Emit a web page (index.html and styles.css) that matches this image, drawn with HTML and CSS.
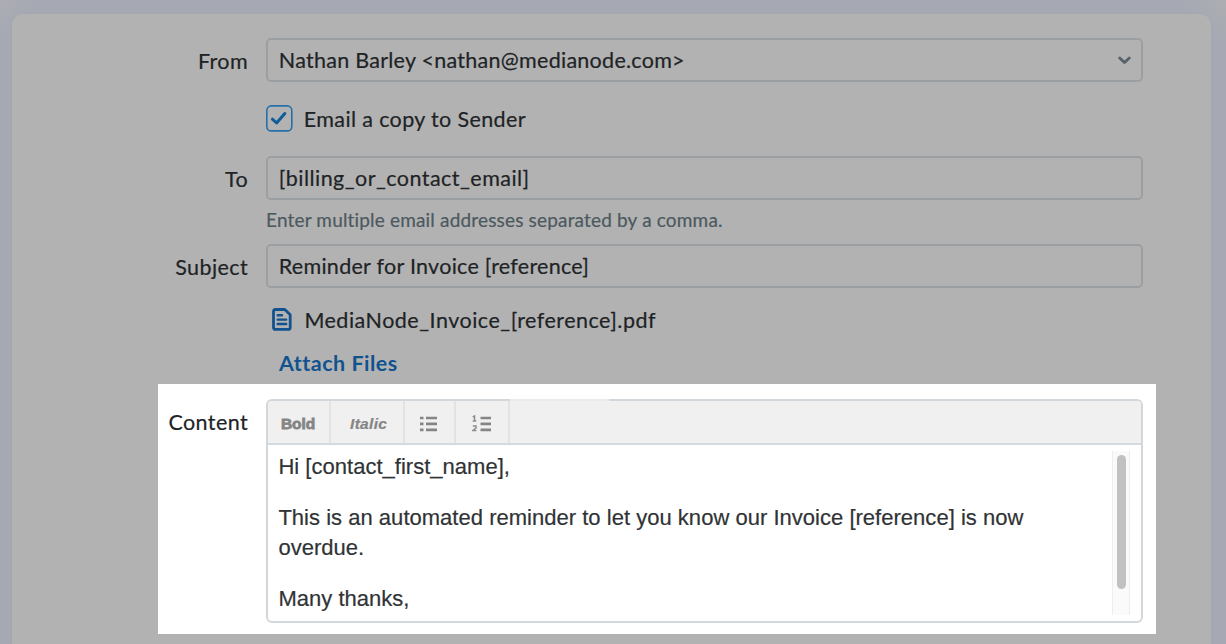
FILE: index.html
```html
<!DOCTYPE html>
<html lang="en">
<head>
<meta charset="utf-8">
<title>Invoice reminder</title>
<link rel="stylesheet" href="styles.css">
</head>
<body>
<main class="panel">
  <div class="row row-from">
    <label class="label">From</label>
    <div class="field"><span class="t-from">Nathan Barley &lt;nathan@medianode.com&gt;</span>
      <svg class="chevron" width="15" height="11" viewBox="0 0 15 11"><path d="M2.7 3L7.5 7.6L12.3 3" fill="none" stroke="#566169" stroke-width="2.8" stroke-linecap="round" stroke-linejoin="round"/></svg>
    </div>
  </div>
  <div class="row row-check">
    <div class="check">
      <svg width="27" height="27" viewBox="0 0 27 27"><rect x="0.8" y="0.9" width="25" height="25" rx="4.5" fill="none" stroke="#2570a8" stroke-width="1.6"/><path d="M6.4 14.2L10.6 18L18.8 8.5" fill="none" stroke="#0f5c98" stroke-width="3" stroke-linecap="round" stroke-linejoin="round"/></svg>
      <span class="t-check">Email a copy to Sender</span>
    </div>
  </div>
  <div class="row row-to">
    <label class="label">To</label>
    <div class="field"><span class="t-to">[billing_or_contact_email]</span></div>
  </div>
  <p class="help">Enter multiple email addresses separated by a comma.</p>
  <div class="row row-subject">
    <label class="label">Subject</label>
    <div class="field"><span class="t-subject">Reminder for Invoice [reference]</span></div>
  </div>
  <div class="file">
    <svg width="20" height="23" viewBox="0 0 20 23"><path d="M3 1.5H12.8L18.2 6.7V19.4Q18.2 21.4 16.2 21.4H3.5Q1.5 21.4 1.5 19.4V3.4Q1.5 1.5 3.4 1.5Z" fill="none" stroke="#12528f" stroke-width="2.8" stroke-linejoin="round"/><path d="M5.7 7.2H10M5.7 11.6H14.2M5.7 16H14.2" fill="none" stroke="#12528f" stroke-width="2.4" stroke-linecap="round"/></svg>
    <span class="t-file">MediaNode_Invoice_[reference].pdf</span>
  </div>
  <a class="attach">Attach Files</a>
  <section class="spotlight">
    <label class="label content-label">Content</label>
    <div class="editor">
      <div class="toolbar">
        <span class="tool bold">Bold</span>
        <span class="tool italic">Italic</span>
        <span class="tool list"><svg width="18" height="17" viewBox="0 0 18 17"><path d="M0 3H3.5M0 8.9H3.5M0 14.8H3.5M6 3H17M6 8.9H17M6 14.8H17" stroke="#858585" stroke-width="2.7" fill="none"/></svg></span>
        <span class="tool numbers"><svg width="20" height="17" viewBox="0 0 20 17"><path d="M8.5 3H19M8.5 8.9H19M8.5 14.8H19" stroke="#858585" stroke-width="2.7" fill="none"/><path d="M.8 2L2.5 1V6M.7 6H4.3M.8 11H4V13L1 15.5H4.5" stroke="#8d8d8d" stroke-width="1.5" fill="none"/></svg></span>
      </div>
      <div class="document">
        <div class="message">
          <p>Hi [contact_first_name],</p>
          <p>This is an automated reminder to let you know our Invoice [reference] is now overdue.</p>
          <p>Many thanks,</p>
        </div>
        <div class="track"><div class="thumb"></div></div>
      </div>
    </div>
  </section>
</main>
</body>
</html>
```
FILE: styles.css
```css
* { box-sizing: border-box; }
body {
  margin: 0;
  height: 644px;
  overflow: hidden;
  padding: 14px 15px 0 12px;
  background:
    radial-gradient(circle at 0 0, #acadb2 0, transparent 32px),
    radial-gradient(circle at 100% 0, #acadb2 0, transparent 44px),
    #a6a9b3;
  font-family: Lato, sans-serif;
  font-size: 21.5px;
  color: #202325;
  -webkit-text-stroke: .2px currentColor;
}
p { margin: 0; }
svg { display: block; flex: none; }
.panel {
  height: 640px;
  padding-top: 24px;
  border-radius: 11px;
  background: #b2b2b2;
  box-shadow: 0 0 3px #a2a4ac;
}
.row {
  display: grid;
  grid-template-columns: 236px 877px;
  column-gap: 17.6px;
  align-items: center;
}
.label { text-align: right; line-height: 26px; white-space: nowrap; padding-top: 1px; letter-spacing: .4px; }
.field {
  display: flex;
  align-items: center;
  justify-content: space-between;
  height: 44px;
  padding: 0 9px 0 11.2px;
  border: 2px solid #9b9fa2;
  border-radius: 5px;
  line-height: 26px;
  white-space: nowrap;
}
.t-from { letter-spacing: .27px; }
.t-check { letter-spacing: .37px; }
.t-to { letter-spacing: .46px; }
.t-subject { letter-spacing: .28px; }
.t-file { padding-top: 2px; letter-spacing: .5px; }
.row-check { margin-top: 23px; }
.check { grid-column: 2; display: flex; align-items: center; gap: 11.2px; height: 27px; }
.row-to { margin-top: 24px; }
.help {
  margin: 6px 0 0 254px;
  height: 27px;
  line-height: 27px;
  font-size: 19px;
  letter-spacing: .17px;
  color: #4c5960;
  white-space: nowrap;
}
.row-subject { margin-top: 11px; }
.file {
  display: flex;
  align-items: center;
  gap: 12.4px;
  height: 26px;
  margin: 18px 0 0 260px;
  white-space: nowrap;
}
.attach {
  display: block;
  height: 26px;
  line-height: 26px;
  margin: 18px 0 0 267px;
  font-weight: 700;
  letter-spacing: .5px;
  -webkit-text-stroke: 0;
  color: #11538e;
}
.spotlight {
  display: grid;
  grid-template-columns: 90px 877px;
  column-gap: 17.6px;
  width: 998px;
  height: 250px;
  margin: 8px 0 0 146px;
  padding-top: 15px;
  background: #fff;
}
.content-label { padding-top: 10px; }
.editor {
  height: 224px;
  border: 2px solid #d2d7dc;
  border-radius: 6px;
}
.toolbar {
  display: flex;
  height: 44px;
  border-radius: 4px 4px 0 0;
  background: #f0f0f0;
  border-bottom: 2px solid #d5dade;
}
/* Softer top edge beside the last tool */
.toolbar::after {
  content: "";
  width: 99px;
  height: 2px;
  margin-top: -2px;
  background: #eaebec;
}
.tool {
  display: flex;
  align-items: center;
  justify-content: center;
  padding-top: 4px;
  border-right: 2px solid #e1e3e4;
  font: 700 15.5px "Liberation Sans", sans-serif;
  color: #858585;
}
.bold { width: 63px; -webkit-text-stroke: .8px #858585; }
.italic { width: 74px; font-style: italic; padding-left: 4px; letter-spacing: .3px; }
.list { width: 51px; padding-top: 2px; }
.numbers { width: 54px; padding-top: 2px; }
.document { display: flex; justify-content: space-between; padding: 6px 11px 0 10.8px; }
.message {
  width: 765px;
  padding-top: 1px;
  font: 22px/29.3px "Liberation Sans", sans-serif;
  letter-spacing: .02px;
  color: #303335;
}
.message p + p { margin-top: 22px; }
.track {
  width: 18px;
  height: 164px;
  padding: 4px 3px 0 4px;
  background: #fafafa;
  border: solid #ededed;
  border-width: 0 1px;
}
.thumb { width: 9px; height: 134px; border-radius: 5px; background: #c1c1c1; }
```
